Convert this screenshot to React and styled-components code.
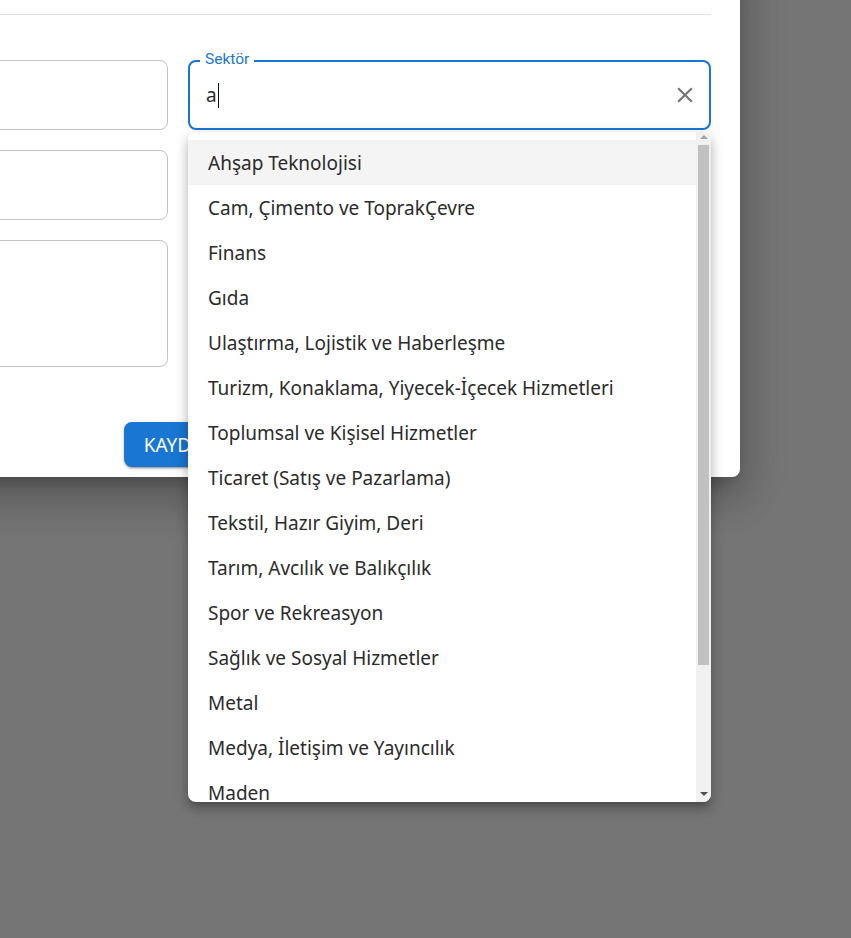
import React from "react";
import styled, { createGlobalStyle } from "styled-components";

const GlobalStyle = createGlobalStyle`
  html, body {
    margin: 0;
    padding: 0;
    background: #757575;
    overflow: hidden;
  }
  * { box-sizing: border-box; }
`;

const sectors = [
  "Ahşap Teknolojisi",
  "Cam, Çimento ve ToprakÇevre",
  "Finans",
  "Gıda",
  "Ulaştırma, Lojistik ve Haberleşme",
  "Turizm, Konaklama, Yiyecek-İçecek Hizmetleri",
  "Toplumsal ve Kişisel Hizmetler",
  "Ticaret (Satış ve Pazarlama)",
  "Tekstil, Hazır Giyim, Deri",
  "Tarım, Avcılık ve Balıkçılık",
  "Spor ve Rekreasyon",
  "Sağlık ve Sosyal Hizmetler",
  "Metal",
  "Medya, İletişim ve Yayıncılık",
  "Maden",
  "Makine, Elektrik ve Elektronik",
  "Kimya, Petrol, Lastik ve Plastik",
  "İnşaat",
];

const Backdrop = styled.div`
  width: 851px;
  height: 938px;
  background: #757575;
  font-family: "Noto Sans", "Open Sans", sans-serif;
  overflow: hidden;
`;

const Dialog = styled.div`
  width: 1124px;
  margin-left: -384px;
  margin-top: -50px;
  background: #fff;
  border-radius: 8px;
  box-shadow: 0 11px 15px -7px rgba(0, 0, 0, 0.2),
    0 24px 38px 3px rgba(0, 0, 0, 0.14), 0 9px 46px 8px rgba(0, 0, 0, 0.12);
  padding: 0 29px 10px 29px;
  display: flex;
  flex-direction: column;
`;

const Title = styled.div`
  height: 65px;
  border-bottom: 1px solid #e0e0e0;
`;

const Form = styled.div`
  display: flex;
  gap: 20px;
  padding-top: 45px;
`;

const Column = styled.div`
  width: 523px;
  display: flex;
  flex-direction: column;
  gap: 20px;
`;

const Outlined = styled.div`
  height: ${(p) => p.$h || 70}px;
  border: 1px solid #c4c4c4;
  border-radius: 8px;
`;

const FieldWrap = styled.div`
  position: relative;
  height: 70px;
`;

const FocusedBox = styled.div`
  height: 70px;
  border: 2px solid #1976d2;
  border-radius: 8px;
  display: flex;
  align-items: center;
  padding: 0 11px 0 16px;
`;

const Label = styled.span`
  position: absolute;
  top: -10px;
  left: 12px;
  padding: 0 5px;
  background: #fff;
  color: #1976d2;
  font-family: Roboto, "Noto Sans", sans-serif;
  font-size: 15.5px;
  line-height: 18px;
`;

const Value = styled.div`
  flex: 1;
  display: flex;
  align-items: center;
  font-size: 19px;
  color: #2b2b2b;
`;

const Caret = styled.span`
  display: inline-block;
  width: 1px;
  height: 25px;
  background: #111;
  margin-left: 1px;
`;

const ClearButton = styled.span`
  display: flex;
  align-items: center;
  justify-content: center;
  width: 26px;
  height: 26px;
  color: #757575;
`;

const Popup = styled.div`
  position: absolute;
  top: 72px;
  left: 0;
  width: 100%;
  height: 670px;
  display: flex;
  background: #fff;
  border-radius: 8px;
  overflow: hidden;
  box-shadow: 0 5px 5px -3px rgba(0, 0, 0, 0.2),
    0 8px 10px 1px rgba(0, 0, 0, 0.14), 0 3px 14px 2px rgba(0, 0, 0, 0.12);
  z-index: 5;
`;

const List = styled.ul`
  flex: 1;
  margin: 0;
  padding: 8px 0;
  list-style: none;
  overflow: hidden;
`;

const Option = styled.li`
  height: 45px;
  display: flex;
  align-items: center;
  padding: 0 20px;
  font-size: 19px;
  color: #2b2b2b;
  white-space: nowrap;
  background: ${(p) => (p.$active ? "#f4f4f4" : "transparent")};
`;

const Scrollbar = styled.div`
  width: 15px;
  display: flex;
  flex-direction: column;
  background: #f1f1f1;
`;

const ScrollArrow = styled.div`
  height: 13px;
  display: flex;
  justify-content: center;
  align-items: ${(p) => (p.$down ? "flex-end" : "flex-start")};
  padding: ${(p) => (p.$down ? "0 0 6px" : "3px 0 0")};
  color: ${(p) => (p.$down ? "#505050" : "#a3a3a3")};
`;

const Track = styled.div`
  flex: 1;
  padding: 0 2px;
`;

const Thumb = styled.div`
  height: 520px;
  background: #c1c1c1;
`;

const Actions = styled.div`
  display: flex;
  justify-content: center;
  padding-top: 55px;
`;

const SaveButton = styled.button`
  height: 45px;
  padding: 0 20px;
  border: none;
  border-radius: 8px;
  background: #1976d2;
  color: #fff;
  font-family: "Noto Sans", sans-serif;
  font-size: 19px;
  text-transform: uppercase;
  box-shadow: 0 3px 1px -2px rgba(0, 0, 0, 0.2), 0 2px 2px 0 rgba(0, 0, 0, 0.14),
    0 1px 5px 0 rgba(0, 0, 0, 0.12);
`;

function CloseIcon() {
  return (
    <svg width="26" height="26" viewBox="0 0 24 24" fill="currentColor">
      <path d="M19 6.41 17.59 5 12 10.59 6.41 5 5 6.41 10.59 12 5 17.59 6.41 19 12 13.41 17.59 19 19 17.59 13.41 12z" />
    </svg>
  );
}

function Triangle({ down }) {
  return (
    <svg width="8" height="4" viewBox="0 0 8 4" fill="currentColor">
      <polygon points={down ? "0,0 8,0 4,4" : "4,0 8,4 0,4"} />
    </svg>
  );
}

export default function App() {
  return (
    <>
      <GlobalStyle />
      <Backdrop>
        <Dialog>
          <Title />
          <Form>
            <Column>
              <Outlined />
              <Outlined />
              <Outlined $h={127} />
            </Column>
            <Column>
              <FieldWrap>
                <FocusedBox>
                  <Value>
                    a<Caret />
                  </Value>
                  <ClearButton>
                    <CloseIcon />
                  </ClearButton>
                </FocusedBox>
                <Label>Sektör</Label>
                <Popup>
                  <List>
                    {sectors.map((s, i) => (
                      <Option key={s} $active={i === 0}>
                        {s}
                      </Option>
                    ))}
                  </List>
                  <Scrollbar>
                    <ScrollArrow>
                      <Triangle />
                    </ScrollArrow>
                    <Track>
                      <Thumb />
                    </Track>
                    <ScrollArrow $down>
                      <Triangle down />
                    </ScrollArrow>
                  </Scrollbar>
                </Popup>
              </FieldWrap>
            </Column>
          </Form>
          <Actions>
            <SaveButton>Kaydet</SaveButton>
          </Actions>
        </Dialog>
      </Backdrop>
    </>
  );
}
